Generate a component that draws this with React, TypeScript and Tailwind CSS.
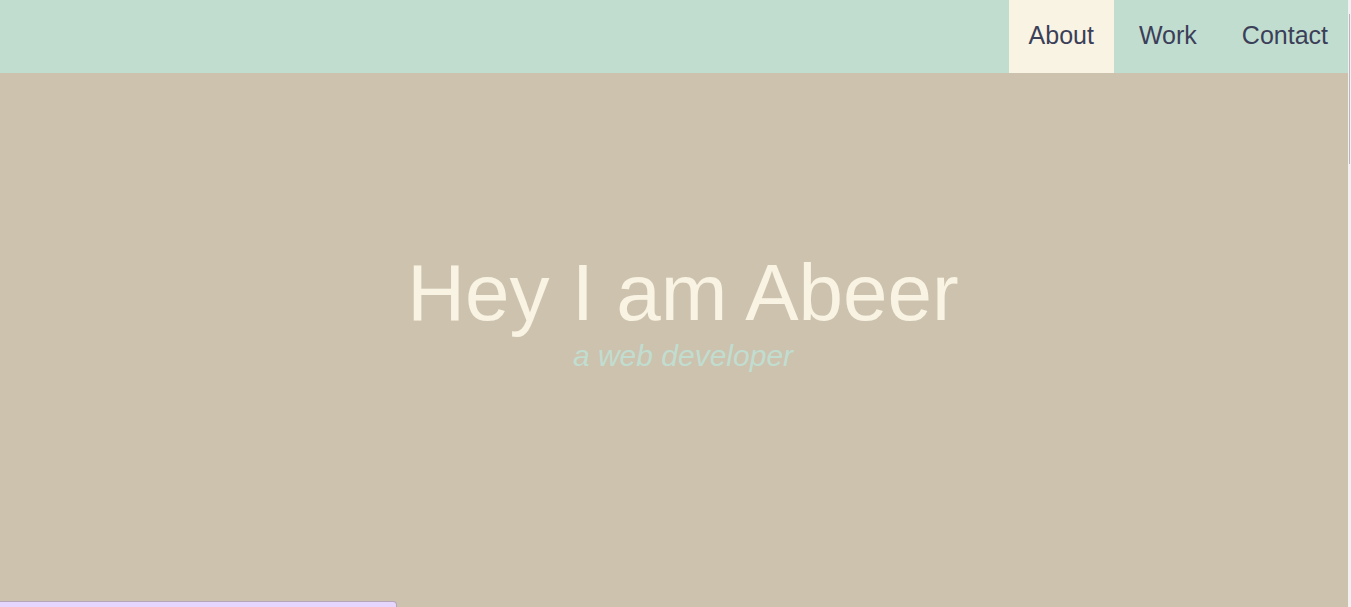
const navItems = ['About', 'Work', 'Contact']

export default function App() {
  const active = 'About'

  return (
    <div className="flex h-[607px] w-full overflow-hidden bg-[#f1f1f1] font-['Liberation_Sans',Arial,sans-serif]">
      <div className="flex min-w-0 flex-1 flex-col">
        {/* top bar */}
        <nav className="flex h-[73px] shrink-0 justify-end bg-[#c1ddd0]">
          <ul className="flex gap-[5px]">
            {navItems.map(item => (
              <li
                key={item}
                className={`flex h-full items-center px-5 text-[25px] text-[#3b3f58] ${item === active ? 'bg-[#f9f3e3]' : ''}`}
              >
                <span className="pb-[2px]">{item}</span>
              </li>
            ))}
          </ul>
        </nav>

        {/* hero */}
        <section className="flex h-[528px] shrink-0 flex-col items-center bg-[#cdc2ae] pl-[18px] pt-[174px]">
          <h1 className="text-[80px] leading-[92px] text-[#f9f3e3]">Hey I am Abeer</h1>
          <p className="text-[30px] italic leading-[34px] text-[#c1ddd0]">a web developer</p>
        </section>

        {/* next section, cut off by the fold */}
        <div className="flex-1 bg-[#cdc2ae]">
          <div className="h-[40px] w-[397px] rounded-tr-[4px] border border-l-0 border-[#b4a5bb] bg-[#e6d5fd]" />
        </div>
      </div>

      {/* scrollbar */}
      <div className="flex w-[3px] shrink-0 flex-col bg-[#f1f1f1] pt-[14px]">
        <div className="ml-px h-[150px] w-px bg-[#b8b8b8]" />
      </div>
    </div>
  )
}
